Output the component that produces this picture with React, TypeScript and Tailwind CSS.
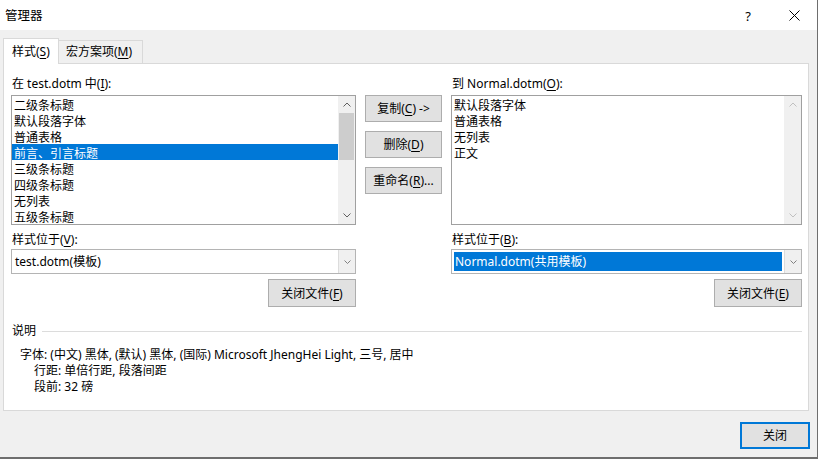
// 管理器 — Word 样式管理器对话框
const LEFT_ITEMS = ['二级条标题', '默认段落字体', '普通表格', '前言、引言标题', '三级条标题', '四级条标题', '无列表', '五级条标题']
const RIGHT_ITEMS = ['默认段落字体', '普通表格', '无列表', '正文']

const Chevron = ({ up, color }: { up?: boolean; color: string }) => (
  <svg width="8" height="5" viewBox="0 0 8 5" fill="none">
    <path d={up ? 'M0.5 4.5 L4 1 L7.5 4.5' : 'M0.5 0.5 L4 4 L7.5 0.5'} stroke={color} strokeWidth="1" />
  </svg>
)

const ScrollBar = ({ disabled }: { disabled?: boolean }) => {
  const arrow = disabled ? '#c0c0c0' : '#606060'
  return (
    <div className="flex w-[17px] flex-col bg-[#f0f0f0]">
      <div className="flex h-[17px] items-center justify-center">
        <Chevron up color={arrow} />
      </div>
      <div className="flex-1 px-px">
        {!disabled && <div className="h-[47px] bg-[#cdcdcd]" />}
      </div>
      <div className="flex h-[17px] items-center justify-center">
        <Chevron color={arrow} />
      </div>
    </div>
  )
}

const ListBox = ({ items, selected }: { items: string[]; selected?: number }) => (
  <div className="flex h-[130px] border border-[#a0a0a0] bg-white">
    <div className="flex-1">
      {items.map((it, i) => (
        <div
          key={it}
          className={[
            'h-[16px] pt-[3px] pl-[2px] leading-[13px] whitespace-nowrap',
            i === selected ? 'bg-[#0078d7] text-white' : '',
          ].join(' ')}
        >
          {it}
        </div>
      ))}
    </div>
    <ScrollBar disabled={selected === undefined} />
  </div>
)

const Combo = ({ value, active }: { value: string; active?: boolean }) => (
  <div className="flex h-[25px] border border-[#b4b4b4] bg-white">
    <div className="flex flex-1 items-center p-[2px]">
      <div
        className={[
          'flex h-full w-full items-center pt-px pl-px leading-[16px]',
          active ? 'bg-[#0078d7] text-white' : '',
        ].join(' ')}
      >
        {value}
      </div>
    </div>
    <div className="flex w-[17px] items-center justify-center border-l border-[#dcdcdc] bg-[#f0f0f0]">
      <svg width="7" height="4" viewBox="0 0 7 4" fill="none">
        <path d="M0.5 0.5 L3.5 3.5 L6.5 0.5" stroke="#808080" strokeWidth="1" />
      </svg>
    </div>
  </div>
)

const Button = ({ children, className }: { children: React.ReactNode; className: string }) => (
  <div
    className={[
      'flex items-center justify-center border border-[#adadad] bg-[#e1e1e1] pt-px leading-[16px]',
      className,
    ].join(' ')}
  >
    {children}
  </div>
)

const U = ({ children }: { children: React.ReactNode }) => (
  <span className="underline underline-offset-2">{children}</span>
)

export default function App() {
  return (
    <div className="flex h-[459px] w-[818px] flex-col border-r border-b-2 border-[#6e6e6e] bg-[#f0f0f0] font-['Noto_Sans','Noto_Sans_CJK_SC',sans-serif] text-[12px] leading-[16px] text-black">
      {/* 标题栏 */}
      <div className="flex h-[30px] items-center bg-white pt-px">
        <div className="flex-1 pl-[5px] text-[12.5px]">管理器</div>
        <div className="flex h-full w-[46px] items-center justify-center text-[13px]">?</div>
        <div className="flex h-full w-[46px] items-center justify-center">
          <svg width="11" height="11" viewBox="0 0 11 11" fill="none">
            <path d="M0.5 0.5 L10.5 10.5 M10.5 0.5 L0.5 10.5" stroke="#000" strokeWidth="1" />
          </svg>
        </div>
      </div>

      <div className="flex flex-1 flex-col px-[3px] pt-[8px]">
        {/* 标签页 */}
        <div className="relative z-10 -mb-px flex h-[26px] items-end">
          <div className="flex h-[26px] w-[56px] items-center border border-b-0 border-[#d9d9d9] bg-white pt-px pl-[8px]">
            样式(<U>S</U>)
          </div>
          <div className="flex h-[24px] w-[84px] items-center border border-l-0 border-[#d9d9d9] bg-[#f0f0f0] pl-[7px]">
            宏方案项(<U>M</U>)
          </div>
        </div>

        {/* 面板 */}
        <div className="h-[348px] w-[806px] border border-[#d9d9d9] bg-white pt-[10px] pr-[6px] pl-[7px]">
          <div className="flex gap-[9px]">
            <div className="flex w-[345px] flex-col">
              <div className="h-[21px] pt-[2px] pl-px">在 test.dotm 中(<U>I</U>):</div>
              <ListBox items={LEFT_ITEMS} selected={3} />
              <div className="h-[24px] pt-[7px] pl-px">样式位于(<U>V</U>):</div>
              <Combo value="test.dotm(模板)" />
              <div className="mt-[5px] flex justify-end">
                <Button className="h-[28px] w-[88px]">关闭文件(<U>F</U>)</Button>
              </div>
            </div>

            <div className="flex w-[77px] flex-col gap-[9px] pt-[21px]">
              <Button className="h-[27px]">复制(<U>C</U>) -&gt;</Button>
              <Button className="h-[27px]">删除(<U>D</U>)</Button>
              <Button className="h-[27px]">重命名(<U>R</U>)...</Button>
            </div>

            <div className="flex w-[351px] flex-col">
              <div className="h-[21px] pt-[2px] pl-px">到 Normal.dotm(<U>O</U>):</div>
              <ListBox items={RIGHT_ITEMS} />
              <div className="h-[24px] pt-[7px] pl-px">样式位于(<U>B</U>):</div>
              <Combo value="Normal.dotm(共用模板)" active />
              <div className="mt-[5px] flex justify-end">
                <Button className="h-[28px] w-[88px]">关闭文件(<U>E</U>)</Button>
              </div>
            </div>
          </div>

          {/* 说明 */}
          <div className="mt-[16px] flex w-[791px] items-center">
            <span className="pl-px">说明</span>
            <div className="ml-[6px] h-px flex-1 bg-[#dcdcdc]" />
          </div>
          <div className="mt-[8px] flex flex-col">
            <div className="h-[16px] pl-[9px]">字体: (中文) 黑体, (默认) 黑体, (国际) Microsoft JhengHei Light, 三号, 居中</div>
            <div className="h-[16px] pl-[23px]">行距: 单倍行距, 段落间距</div>
            <div className="h-[16px] pl-[23px]">段前: 32 磅</div>
          </div>
        </div>

        {/* 底部按钮 */}
        <div className="mt-[11px] flex justify-end pr-[4px]">
          <div className="flex h-[27px] w-[70px] items-center justify-center border border-[#0078d7] bg-[#e1e1e1] pt-px shadow-[inset_0_0_0_1px_#0078d7]">
            关闭
          </div>
        </div>
      </div>
    </div>
  )
}
